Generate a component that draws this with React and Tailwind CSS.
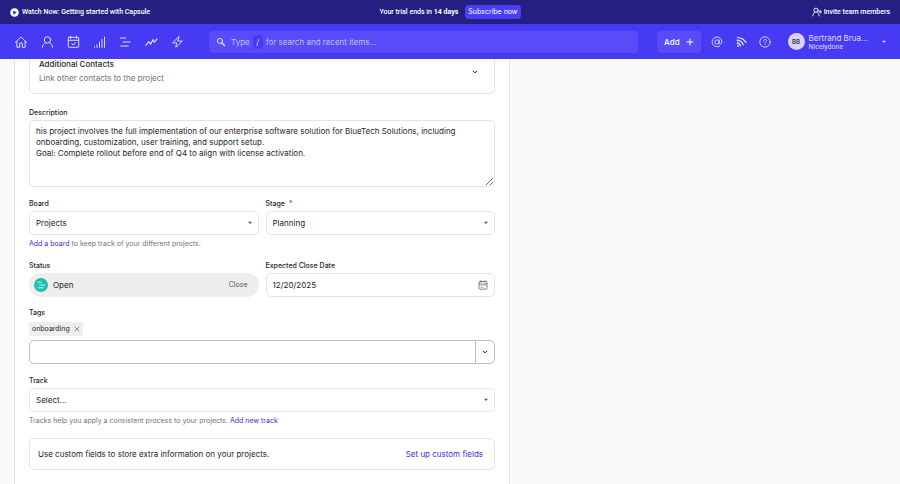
import React, { useState } from "react";

const stroke = {
  fill: "none",
  stroke: "currentColor",
  strokeWidth: 1,
  strokeLinecap: "round",
  strokeLinejoin: "round",
};

const HomeIcon = () => (
  <svg viewBox="0 0 14 14" className="size-3.5" {...stroke}>
    <path d="M1.3 7.4 7 2l5.7 5.4M2.9 6.1v6.2h2.8V9a1.3 1.3 0 0 1 2.6 0v3.3h2.800V6.100" />
  </svg>
);

const PersonIcon = () => (
  <svg viewBox="0 0 14 14" className="size-3.5" {...stroke}>
    <circle cx="7.5" cy="4.9" r="3.2" />
    <path d="M2.300 12.400C2.700 9.900 4 8.500 5.700 7.700M12.700 12.400C12.300 9.900 11 8.500 9.300 7.700" />
  </svg>
);

const CalendarCheckIcon = () => (
  <svg viewBox="0 0 14 14" className="size-3.5" {...stroke}>
    <rect x="2.3" y="2.300" width="10.400" height="10" rx=".8" />
    <path d="M2.300 5.300h10.400M4.700 1.200v2.200M10.300 1.200v2.200M5.800 8.700l1.400 1.300 2.200-2.400" />
  </svg>
);

const BarsIcon = () => (
  <svg viewBox="0 0 14 14" className="size-3.5" {...stroke}>
    <path d="M2.500 11.500v.8M5 9.600v2.700M7.500 7v5.300M10 4.500v7.800M12.500 2v10.300" />
  </svg>
);

const BoardIcon = ({ className = "size-3.5" }) => (
  <svg viewBox="0 0 14 14" className={className} {...stroke} strokeWidth="1.1">
    <path d="M2.500 3h5.300M5 7h7.300M2.800 11h7.500" />
  </svg>
);

const ActivityIcon = () => (
  <svg viewBox="0 0 14 14" className="size-3.5" {...stroke} strokeWidth="1.200">
    <path d="M1.800 10.400 4.800 6.600l1.900 2.500 2.300-4.400 1.500 2.400 2.500-3.200" />
  </svg>
);

const BoltIcon = () => (
  <svg viewBox="0 0 14 14" className="size-3.5" {...stroke}>
    <path d="M8.900 1.600 2.600 7.900h4.100l-.9 4.500 6.600-6.300H8z" />
  </svg>
);

const SearchIcon = () => (
  <svg viewBox="0 0 10 10" className="size-2.5" {...stroke}>
    <circle cx="3.900" cy="3.900" r="2.500" />
    <path d="M5.900 5.900 8.500 8.500" strokeWidth="1.500" />
  </svg>
);

const AtIcon = () => (
  <svg viewBox="0 0 12 12" className="size-3" {...stroke} strokeWidth=".9">
    <circle cx="6" cy="6" r="2.200" />
    <path d="M8.200 3.900v2.800c0 1.800 2.700 1.700 2.700-.7a4.900 4.900 0 1 0-2.200 4" />
  </svg>
);

const FeedIcon = () => (
  <svg viewBox="0 0 12 12" className="size-3" {...stroke} strokeWidth="1.400">
    <circle cx="2.900" cy="9.900" r=".9" fill="currentColor" stroke="none" />
    <path d="M2.200 7c1.600.2 2.800 1.200 3.200 2.900M2.200 4.300c3 .2 5 1.800 6 4.400M2.400 1.600c3.600.1 6.600 1.600 8.500 4.700" />
  </svg>
);

const HelpIcon = () => (
  <svg viewBox="0 0 12 12" className="size-3" {...stroke} strokeWidth=".9">
    <circle cx="6" cy="6" r="5.200" />
    <path d="M4.600 4.800c0-1.900 2.900-1.800 2.900 0 0 1-1.500 1.100-1.500 2.200M6 8.700v.1" />
  </svg>
);

const InviteIcon = () => (
  <svg viewBox="0 0 10 10" className="size-2.5" {...stroke} strokeWidth=".9">
    <circle cx="4" cy="3.200" r="2.100" />
    <path d="M.8 8.900c.2-2 1-3.200 2.200-3.800M7.200 8.900C7 6.900 6.200 5.700 5 5.100M8.200 3.500v2.600M6.900 4.800h2.600" />
  </svg>
);

const PlayIcon = () => (
  <svg viewBox="0 0 9 9" className="size-[9px]">
    <circle cx="4.500" cy="4.500" r="4.300" fill="#fff" />
    <path d="M3.300 2.400 6.600 4.500 3.300 6.600z" fill="#241f80" />
  </svg>
);

const CalendarIcon = () => (
  <svg viewBox="0 0 10 10" className="size-2.5" {...stroke} strokeWidth=".8">
    <rect x="1" y="1.500" width="8" height="7.700" rx="1" />
    <path d="M1 4h8M3 .6v1.700M7 .6v1.700" />
    <path d="M3 5.600h.2M5 5.600h.2M7 5.600h.2M3 7.400h.2M5 7.400h.2" />
  </svg>
);

const Caret = ({ className = "" }) => (
  <svg viewBox="0 0 6 4" className={`h-1 w-1.5 ${className}`}>
    <path d="M1 .8h4L3 3.100z" fill="currentColor" />
  </svg>
);

const Chevron = () => (
  <svg viewBox="0 0 6 4" className="h-1 w-1.5" {...stroke}>
    <path d="M1 1l2 1.800L5 1" />
  </svg>
);

const navItems = [
  { label: "Home", Icon: HomeIcon },
  { label: "People", Icon: PersonIcon },
  { label: "Calendar", Icon: CalendarCheckIcon },
  { label: "Sales", Icon: BarsIcon },
  { label: "Projects", Icon: BoardIcon },
  { label: "Activity", Icon: ActivityIcon },
  { label: "Automations", Icon: BoltIcon },
];

const labelClass = "block text-[7px] leading-[10px] font-medium text-[#262626]";
const fieldClass =
  "w-full rounded-[5px] border border-[#e4e4e4] bg-white px-1.5 text-[8px] text-[#262626] outline-none";

const SelectField = ({ id, label, required, options }) => (
  <div>
    <label htmlFor={id} className={labelClass}>
      {label}
      {required && <span className="ml-1 text-[#d92d20]">*</span>}
    </label>
    <div className="relative mt-[2px]">
      <select id={id} className={`${fieldClass} block h-6 appearance-none`}>
        {options.map((option) => (
          <option key={option}>{option}</option>
        ))}
      </select>
      <Caret className="pointer-events-none absolute top-2.5 right-1.5 text-[#555]" />
    </div>
  </div>
);

const TopBar = () => (
  <div className="grid h-6 grid-cols-[1fr_auto_1fr] items-center bg-[#241f80] px-2.5 font-[Roboto,sans-serif] text-[7px] font-medium text-white">
    <a href="#watch" className="flex items-center gap-[3px]">
      <PlayIcon />
      Watch Now: Getting started with Capsule
    </a>
    <div className="flex items-center gap-[7px]">
      <span>
        Your trial ends in <b className="font-bold">14 days</b>
      </span>
      <button className="h-3.5 rounded-[4px] bg-[#4b3ff5] px-[3px] font-[Inter,sans-serif] font-normal">
        Subscribe now
      </button>
    </div>
    <a href="#invite" className="flex items-center gap-[2px] justify-self-end">
      <InviteIcon />
      Invite team members
    </a>
  </div>
);

const NavBar = () => (
  <div className="flex h-[35px] items-center bg-[#473af5] pr-[13px] pl-3.5 text-[#dedbff]">
    <nav className="flex gap-3">
      {navItems.map(({ label, Icon }) => (
        <a key={label} href="#nav" aria-label={label}>
          <Icon />
        </a>
      ))}
    </nav>
    <button className="ml-[25px] flex h-[22px] flex-1 items-center rounded-[4px] bg-[#584cf9] px-[7px] text-[8px] text-[#c3beff]">
      <span className="mr-[5px] text-[#dedbff]">
        <SearchIcon />
      </span>
      Type
      <kbd className="mx-[3px] flex h-3.5 w-2.5 items-center justify-center rounded-[3px] bg-[#473af5] font-[Inter,sans-serif] text-[#dedbff]">
        /
      </kbd>
      for search and recent items...
    </button>
    <button className="ml-[19px] flex h-[22px] items-center gap-1.5 rounded-[4px] bg-[#584cf9] px-[7px] text-[8px] font-medium text-white">
      Add
      <svg viewBox="0 0 8 8" className="size-2" {...stroke}>
        <path d="M4 1v6M1 4h6" />
      </svg>
    </button>
    <div className="ml-2.5 flex gap-3">
      <button aria-label="Mentions">
        <AtIcon />
      </button>
      <button aria-label="Updates">
        <FeedIcon />
      </button>
      <button aria-label="Help">
        <HelpIcon />
      </button>
    </div>
    <button className="ml-[17px] flex items-center text-left">
      <span className="flex size-[17px] items-center justify-center rounded-full bg-[#ddd3f8] text-[6px] font-semibold text-[#3b3357]">
        BB
      </span>
      <span className="ml-1 flex flex-col pt-px">
        <span className="text-[8px] leading-[10px]">Bertrand Brua...</span>
        <span className="font-[Roboto,sans-serif] text-[7px] leading-[9px]">
          Nicelydone
        </span>
      </span>
      <Caret className="ml-[13px]" />
    </button>
  </div>
);

const App = () => {
  const [description, setDescription] = useState(
    "his project involves the full implementation of our enterprise software solution for BlueTech Solutions, including onboarding, customization, user training, and support setup.\nGoal: Complete rollout before end of Q4 to align with license activation."
  );
  const [closeDate, setCloseDate] = useState("12/20/2025");
  const [tags, setTags] = useState(["onboarding"]);

  return (
    <div className="flex min-h-screen flex-col bg-[#fafaf9] font-[Inter,sans-serif] text-[#262626]">
      <header className="sticky top-0 z-10">
        <TopBar />
        <NavBar />
      </header>

      {/* the form is scrolled, so its first panel runs under the header */}
      <main className="-mt-4 flex flex-1 px-3.5">
        <form className="w-full max-w-[496px] border-x border-[#e4e4e4] bg-white px-3.5 pb-3">
          <section className="flex h-[51px] items-center justify-between rounded-b-[5px] border border-[#e4e4e4] pt-1.5 pr-4 pl-[9px]">
            <div className="pb-[2px]">
              <h2 className="text-[8px] leading-[14px] font-medium">
                Additional Contacts
              </h2>
              <p className="text-[8px] leading-[14px] text-[#737373]">
                Link other contacts to the project
              </p>
            </div>
            <button type="button" aria-label="Expand additional contacts">
              <Chevron />
            </button>
          </section>

          <div className="mt-3.5">
            <label htmlFor="description" className={labelClass}>
              Description
            </label>
            <textarea
              id="description"
              value={description}
              onChange={(e) => setDescription(e.target.value)}
              className={`${fieldClass} mt-[2px] block h-[67px] resize-y py-[5px] leading-[11px]`}
            />
          </div>

          <div className="mt-3 grid grid-cols-2 gap-[7px]">
            <div>
              <SelectField id="board" label="Board" options={["Projects"]} />
              <p className="mt-1 text-[7px] leading-[10px] text-[#737373]">
                <a href="#board" className="text-[#3a2fd0]">
                  Add a board
                </a>{" "}
                to keep track of your different projects.
              </p>
            </div>
            <SelectField
              id="stage"
              label="Stage"
              required
              options={["Planning"]}
            />
          </div>

          <div className="mt-3 grid grid-cols-2 gap-[7px]">
            <div>
              <span className={labelClass}>Status</span>
              <div className="mt-[2px] flex h-6 items-center rounded-full bg-[#eeeeec] pr-[11px] pl-[5px] text-[8px]">
                <span className="mr-[5px] flex size-3.5 items-center justify-center rounded-full bg-[#1bbfb3] text-white">
                  <BoardIcon className="size-2.5" />
                </span>
                Open
                <button
                  type="button"
                  className="ml-auto text-[7px] text-[#555]"
                >
                  Close
                </button>
              </div>
            </div>
            <div>
              <label htmlFor="close-date" className={labelClass}>
                Expected Close Date
              </label>
              <div className="mt-[2px] flex h-6 items-center rounded-[5px] border border-[#e4e4e4] px-1.5">
                <input
                  id="close-date"
                  type="text"
                  value={closeDate}
                  onChange={(e) => setCloseDate(e.target.value)}
                  className="min-w-0 flex-1 text-[8px] outline-none"
                />
                <button
                  type="button"
                  aria-label="Pick a date"
                  className="text-[#666]"
                >
                  <CalendarIcon />
                </button>
              </div>
            </div>
          </div>

          <div className="mt-[11px]">
            <label htmlFor="tags" className={labelClass}>
              Tags
            </label>
            <ul className="mt-1 flex min-h-3.5 gap-1">
              {tags.map((tag) => (
                <li
                  key={tag}
                  className="flex h-3.5 items-center gap-1 rounded-[2px] bg-[#eeeeec] px-[3px] text-[7px]"
                >
                  {tag}
                  <button
                    type="button"
                    aria-label={`Remove ${tag}`}
                    onClick={() => setTags(tags.filter((t) => t !== tag))}
                  >
                    <svg
                      viewBox="0 0 6 6"
                      className="block size-1.5 text-[#777]"
                      {...stroke}
                      strokeWidth=".8"
                    >
                      <path d="M1 1l4 4M5 1 1 5" />
                    </svg>
                  </button>
                </li>
              ))}
            </ul>
            <div className="mt-1 flex h-6 rounded-[5px] border border-[#bdbdbd]">
              <input
                id="tags"
                type="text"
                className="min-w-0 flex-1 px-1.5 text-[8px] outline-none"
              />
              <button
                type="button"
                aria-label="Show tags"
                className="flex w-[19px] items-center justify-center border-l border-[#bdbdbd]"
              >
                <Chevron />
              </button>
            </div>
          </div>

          <div className="mt-3">
            <SelectField id="track" label="Track" options={["Select..."]} />
            <p className="mt-1 text-[7px] leading-[10px] text-[#737373]">
              Tracks help you apply a consistent process to your projects.{" "}
              <a href="#track" className="text-[#3a2fd0]">
                Add new track
              </a>
            </p>
          </div>

          <section className="mt-3 flex h-8 items-center justify-between rounded-[5px] border border-[#e4e4e4] pr-[11px] pl-2 text-[8px]">
            <p>Use custom fields to store extra information on your projects.</p>
            <a href="#fields" className="text-[#3a2fd0]">
              Set up custom fields
            </a>
          </section>
        </form>
      </main>
    </div>
  );
};

export default App;
